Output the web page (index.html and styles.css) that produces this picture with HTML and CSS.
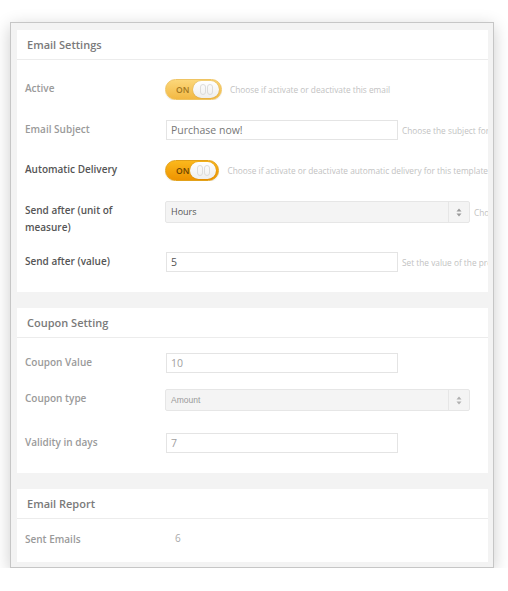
FILE: index.html
```html
<!DOCTYPE html>
<html lang="en">
<head>
    <meta charset="UTF-8">
    <meta name="viewport" content="width=device-width, initial-scale=1.0">
    <title>Email Settings</title>
    <link rel="stylesheet" href="styles.css">
</head>
<body>

    <div class="frame">

        <section class="panel">
            <h3 class="panel-title">Email Settings</h3>
            <div class="panel-body">
                <div class="row">
                    <label class="row-label">Active</label>
                    <div class="row-field">
                        <span class="toggle toggle-soft">ON<span class="knob"><i></i><i></i></span></span>
                        <span class="hint hint-toggle">Choose if activate or deactivate this email</span>
                    </div>
                </div>
                <div class="row">
                    <label class="row-label">Email Subject</label>
                    <div class="row-field">
                        <input class="text-input" type="text" value="Purchase now!">
                        <span class="hint">Choose the subject for the email</span>
                    </div>
                </div>
                <div class="row">
                    <label class="row-label strong">Automatic Delivery</label>
                    <div class="row-field">
                        <span class="toggle">ON<span class="knob"><i></i><i></i></span></span>
                        <span class="hint hint-toggle">Choose if activate or deactivate automatic delivery for this template</span>
                    </div>
                </div>
                <div class="row row-tall">
                    <label class="row-label strong">Send after (unit of measure)</label>
                    <div class="row-field">
                        <div class="select">
                            <span class="select-value">Hours</span>
                            <span class="select-arrow">
                                <svg width="6" height="9" viewBox="0 0 6 9"><path d="M3 0.5 L5.5 3.5 H0.5 Z M3 8.5 L5.5 5.5 H0.5 Z" fill="#9a9a9a"/></svg>
                            </span>
                        </div>
                        <span class="hint">Choose the unit of measure</span>
                    </div>
                </div>
                <div class="row">
                    <label class="row-label strong">Send after (value)</label>
                    <div class="row-field">
                        <input class="text-input dark" type="text" value="5">
                        <span class="hint">Set the value of the previous field</span>
                    </div>
                </div>
            </div>
        </section>

        <section class="panel">
            <h3 class="panel-title">Coupon Setting</h3>
            <div class="panel-body coupon">
                <div class="row">
                    <label class="row-label">Coupon Value</label>
                    <div class="row-field">
                        <input class="text-input light" type="text" value="10">
                    </div>
                </div>
                <div class="row row-select">
                    <label class="row-label">Coupon type</label>
                    <div class="row-field">
                        <div class="select select-plain">
                            <span class="select-value">Amount</span>
                            <span class="select-arrow">
                                <svg width="6" height="9" viewBox="0 0 6 9"><path d="M3 0.5 L5.5 3.5 H0.5 Z M3 8.5 L5.5 5.5 H0.5 Z" fill="#b0b0b0"/></svg>
                            </span>
                        </div>
                    </div>
                </div>
                <div class="row">
                    <label class="row-label">Validity in days</label>
                    <div class="row-field">
                        <input class="text-input light" type="text" value="7">
                    </div>
                </div>
            </div>
        </section>

        <section class="panel">
            <h3 class="panel-title">Email Report</h3>
            <div class="panel-body report">
                <div class="row">
                    <label class="row-label">Sent Emails</label>
                    <div class="row-field">
                        <span class="stat">6</span>
                    </div>
                </div>
            </div>
        </section>

    </div>

</body>
</html>
```

FILE: styles.css
```css
body {
    font-family: "Open Sans", "Liberation Sans", sans-serif;
    margin: 0;
    background-color: #fff;
}

.frame {
    width: 471px;
    margin: 22px 0 0 10px;
    padding: 7px 5px 5px 6px;
    background: #f3f3f3;
    border: 1px solid #c6c6c6;
    box-shadow: 0 4px 16px rgba(0, 0, 0, 0.2);
}

.panel {
    background: #fff;
    overflow: hidden;
    margin-bottom: 16px;
}

.panel:last-child {
    margin-bottom: 0;
}

.panel-title {
    margin: 0;
    height: 29px;
    line-height: 29px;
    padding-left: 10px;
    font-size: 11px;
    font-weight: 600;
    color: #7a7a7a;
    border-bottom: 1px solid #ececec;
}

.panel-body {
    padding: 19px 0 20px 8px;
}

.panel-body.coupon {
    padding: 15px 0 20px 8px;
}

.panel-body.report {
    padding: 11px 0 14px 8px;
}

.row {
    display: grid;
    grid-template-columns: 140px minmax(0, 1fr);
    align-items: start;
    margin-bottom: 20px;
}

.coupon .row {
    margin-bottom: 16px;
}

.coupon .row.row-select {
    margin-bottom: 22px;
}

.row.row-tall {
    margin-bottom: 16px;
}

.row:last-child {
    margin-bottom: 0;
}

.row-label {
    padding-top: 1px;
    font-size: 10px;
    line-height: 17px;
    font-weight: 600;
    color: #9a9a9a;
    padding-right: 20px;
}

.row-label.strong {
    color: #555;
}

.row-field {
    display: flex;
    align-items: center;
    white-space: nowrap;
    overflow: hidden;
}

.hint {
    flex-shrink: 0;
    margin-left: 4px;
    font-size: 8.3px;
    color: #c2c2c2;
}

.hint-toggle {
    margin-left: 8px;
}

/* on/off switch */
.toggle {
    display: flex;
    align-items: center;
    justify-content: space-between;
    box-sizing: border-box;
    width: 57px;
    height: 21px;
    padding: 0 2px 0 10px;
    border-radius: 11px;
    border: 1px solid #e2a11a;
    background: linear-gradient(#fbb81c, #ee9300);
    font-size: 8.5px;
    font-weight: 600;
    color: #6e4300;
    box-shadow: 0 1px 1px rgba(0, 0, 0, 0.08);
}

.toggle-soft {
    border-color: #efc463;
    background: linear-gradient(#fcd77a, #f2b843);
    color: #a27620;
}

.knob {
    display: flex;
    justify-content: center;
    align-items: center;
    gap: 1px;
    width: 26px;
    height: 17px;
    border-radius: 9px;
    background: linear-gradient(#fff, #eeeeee);
    box-shadow: 0 0 1px rgba(0, 0, 0, 0.35);
}

.knob i {
    width: 4px;
    height: 9px;
    border: 1px solid #dcdcdc;
    border-radius: 3px;
}

.text-input {
    box-sizing: border-box;
    flex-shrink: 0;
    width: 232px;
    height: 20px;
    margin: 0 0 0 1px;
    padding: 0 4px;
    border: 1px solid #e4e4e4;
    font-family: "Open Sans", sans-serif;
    font-size: 10.5px;
    color: #777;
    outline: none;
}

.text-input.dark {
    color: #555;
}

.text-input.light {
    color: #a0a0a0;
}

.select {
    display: flex;
    flex-shrink: 0;
    box-sizing: border-box;
    width: 305px;
    height: 22px;
    border: 1px solid #e6e6e6;
    background: #f4f4f4;
    border-radius: 2px;
}

.select-value {
    flex: 1;
    padding-left: 5px;
    font-size: 9px;
    line-height: 20px;
    color: #555;
}

.select-plain .select-value {
    font-family: "Liberation Sans", Arial, sans-serif;
    font-size: 8.5px;
    color: #9a9a9a;
}

.select-arrow {
    display: flex;
    align-items: center;
    justify-content: center;
    width: 20px;
    border-left: 1px solid #e6e6e6;
}

.stat {
    padding-left: 10px;
    padding-top: 1px;
    font-size: 10px;
    color: #aaa;
}
```
